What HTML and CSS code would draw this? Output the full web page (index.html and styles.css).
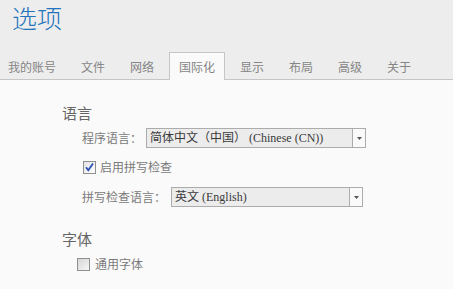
FILE: index.html
```html
<!DOCTYPE html>
<html lang="zh-CN">
<head>
<meta charset="utf-8">
<title>选项</title>
<link rel="stylesheet" href="styles.css">
</head>
<body>
<header class="header">
  <h1 class="title">选项</h1>
  <nav class="tabs">
    <span class="tab">我的账号</span>
    <span class="tab">文件</span>
    <span class="tab">网络</span>
    <span class="tab active">国际化</span>
    <span class="tab">显示</span>
    <span class="tab">布局</span>
    <span class="tab">高级</span>
    <span class="tab">关于</span>
  </nav>
</header>
<main class="content">
  <h2 class="section-title">语言</h2>
  <div class="row field-row first">
    <span class="label">程序语言：</span>
    <div class="select select-wide">
      <span class="select-text">简体中文（中国） (Chinese (CN))</span>
      <span class="select-arrow"><svg width="5" height="3" viewBox="0 0 5 3"><path d="M0 0H5L2.5 3Z" fill="#555"/></svg></span>
    </div>
  </div>
  <div class="row check-row">
    <span class="checkbox checked"><svg width="11" height="11" viewBox="0 0 11 11"><path d="M2 5.2L4.3 8.3L9 1.6" fill="none" stroke="#2a4fb5" stroke-width="1.8"/></svg></span>
    <span class="label">启用拼写检查</span>
  </div>
  <div class="row field-row">
    <span class="label label-gap">拼写检查语言：</span>
    <div class="select select-narrow">
      <span class="select-text">英文 (English)</span>
      <span class="select-arrow"><svg width="5" height="3" viewBox="0 0 5 3"><path d="M0 0H5L2.5 3Z" fill="#555"/></svg></span>
    </div>
  </div>
  <h2 class="section-title second">字体</h2>
  <div class="row check-row font-row">
    <span class="checkbox"></span>
    <span class="label">通用字体</span>
  </div>
</main>
</body>
</html>
```
FILE: styles.css
```css
html, body {
  margin: 0;
  padding: 0;
}
body {
  background: #fafafa;
  font-family: "Noto Sans CJK SC", "Noto Sans", sans-serif;
  color: #666;
}
.header {
  background: #ededed;
}
.title {
  margin: 0;
  padding: 5px 0 0 12px;
  font-size: 25px;
  line-height: 25px;
  font-weight: 300;
  color: #2474bb;
}
.tabs {
  display: flex;
  gap: 5px;
  margin-top: 22px;
  margin-left: -2px;
  height: 27px;
  border-bottom: 1px solid #c6c6c6;
}
.tab {
  padding: 0 9px;
  height: 28px;
  line-height: 28px;
  font-size: 12px;
  color: #858585;
  border: 1px solid transparent;
  border-bottom: none;
  box-sizing: border-box;
  white-space: nowrap;
}
.tab.active {
  background: #fafafa;
  border-color: #c6c6c6;
}
.content {
  padding: 23px 0 0 62px;
}
.section-title {
  margin: 0;
  font-size: 15px;
  line-height: 20px;
  font-weight: 400;
  color: #666;
}
.section-title.second {
  margin-top: 22px;
}
.row {
  display: flex;
  align-items: center;
  height: 20px;
}
.field-row {
  padding-left: 20px;
  margin-top: 10px;
}
.field-row.first {
  margin-top: 5px;
}
.check-row {
  padding-left: 21px;
  margin-top: 9px;
}
.font-row {
  padding-left: 15px;
  margin-top: 5px;
}
.label {
  font-size: 12px;
  line-height: 20px;
  color: #7a7a7a;
  margin-right: 4px;
  white-space: nowrap;
}
.label-gap {
  margin-right: 5px;
}
.checkbox {
  width: 13px;
  height: 13px;
  box-sizing: border-box;
  border: 1px solid #8f8f8f;
  background: linear-gradient(135deg, #d6d6d6, #f6f6f6);
  margin-right: 4px;
  display: flex;
  align-items: center;
  justify-content: center;
}
.checkbox.checked {
  background: linear-gradient(135deg, #e4e4e4, #ffffff);
}
.font-row .checkbox {
  margin-right: 5px;
}
.select {
  display: flex;
  height: 20px;
  box-sizing: border-box;
  border: 1px solid #acacac;
  background: #ececec;
}
.select-wide {
  width: 220px;
}
.select-narrow {
  width: 192px;
}
.select-text {
  flex: 1;
  padding-left: 3px;
  font-family: "Liberation Serif", "Noto Sans CJK SC", serif;
  font-size: 12px;
  line-height: 18px;
  color: #3a3a3a;
  white-space: nowrap;
  overflow: hidden;
}
.select-arrow {
  width: 12px;
  border-left: 1px solid #acacac;
  background: #fafafa;
  display: flex;
  align-items: center;
  justify-content: center;
}
```
